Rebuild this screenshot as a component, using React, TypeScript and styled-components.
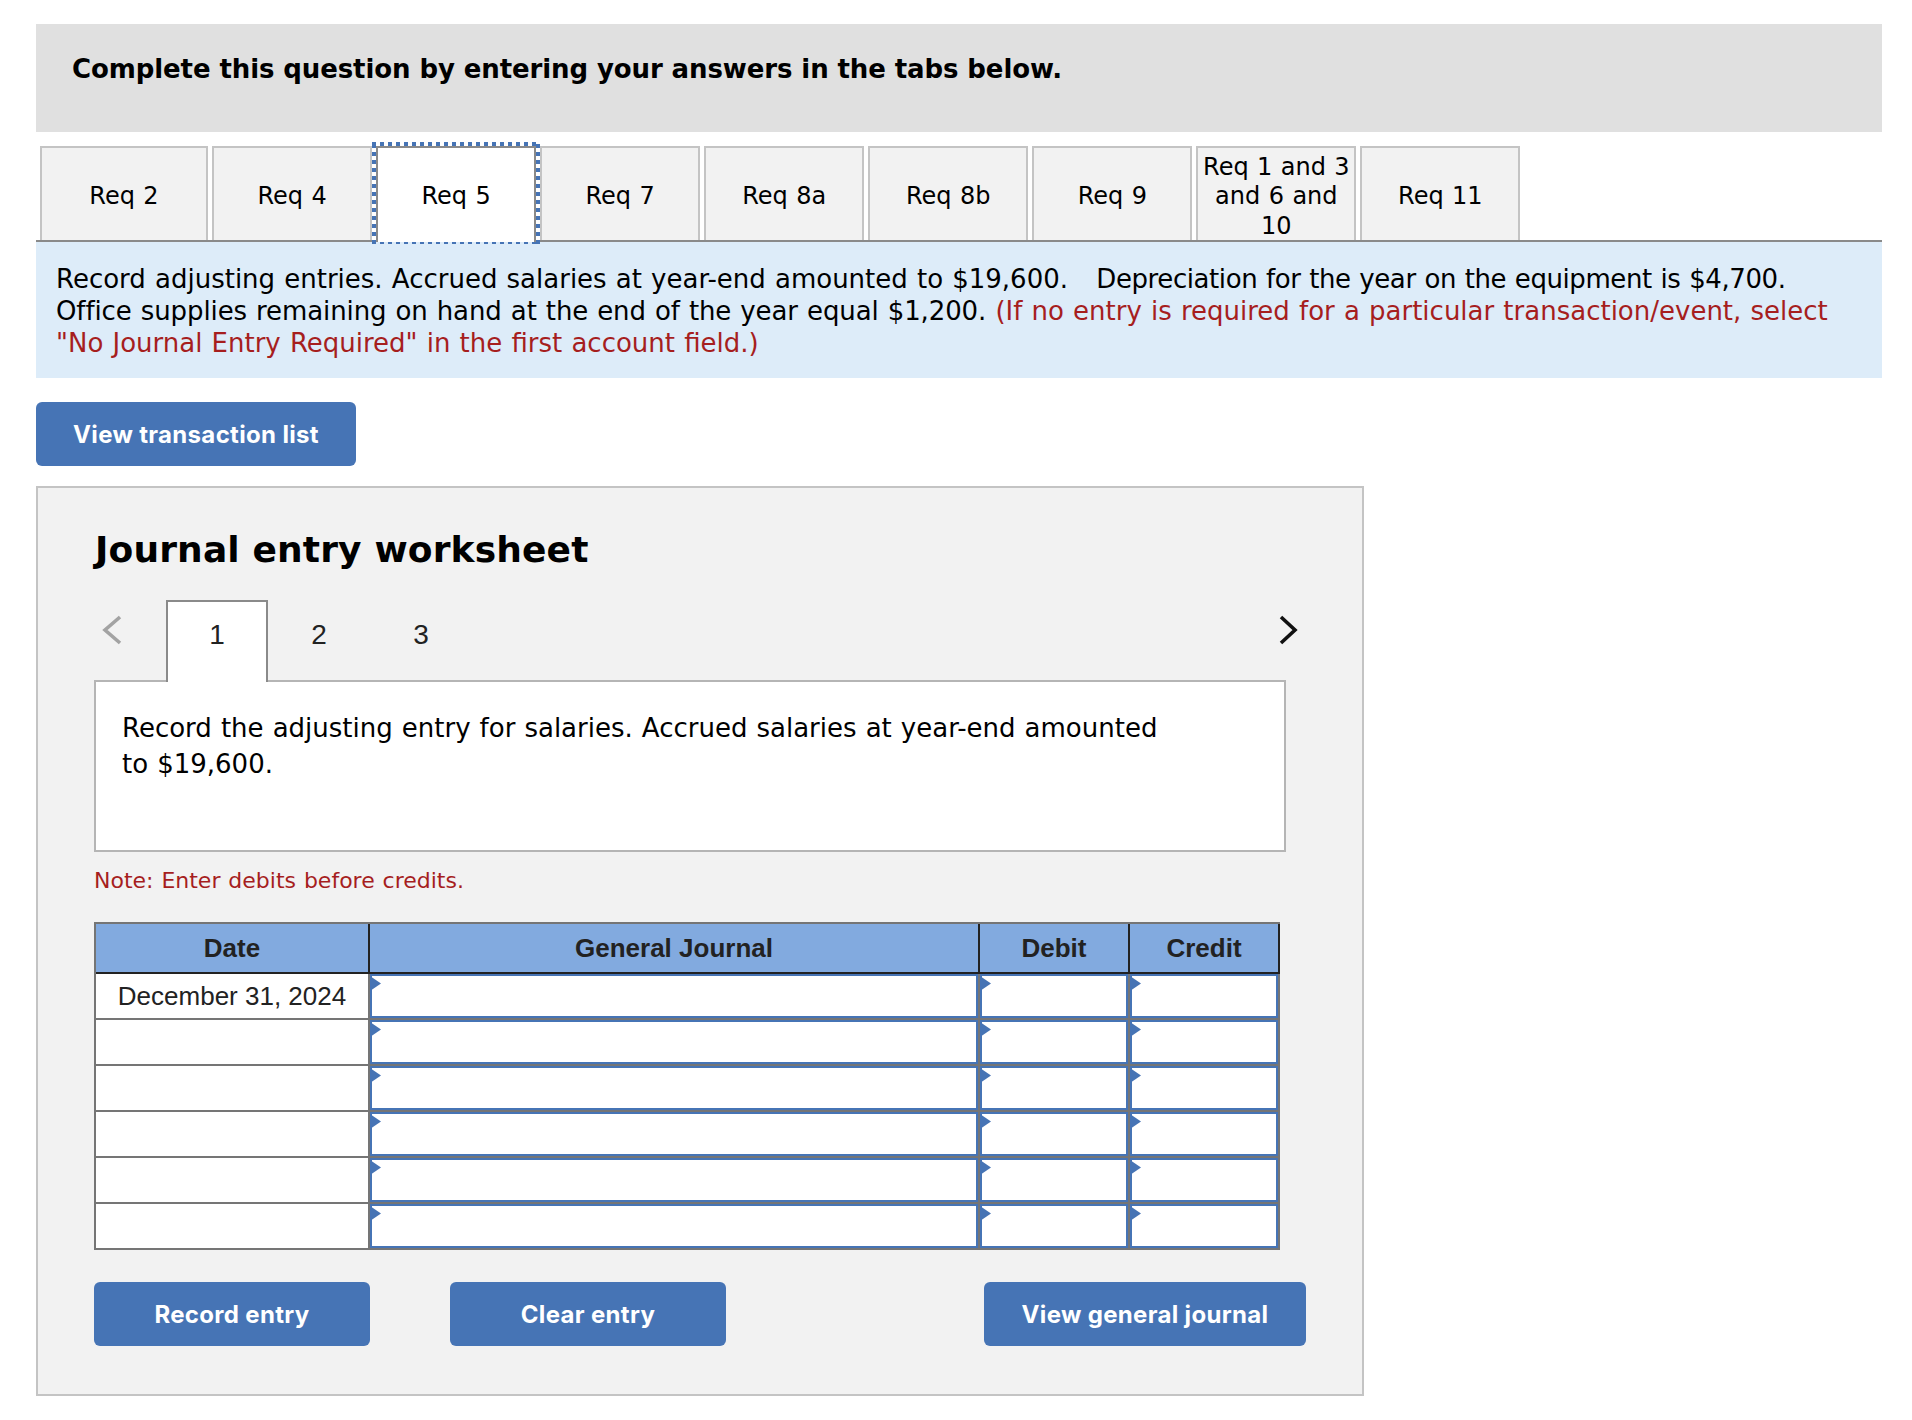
import React from "react";
import styled, { createGlobalStyle } from "styled-components";

const GlobalStyle = createGlobalStyle`
  html, body { margin: 0; padding: 0; background: #fff; }
  * { box-sizing: border-box; }
`;

const verdana = `"DejaVu Sans", Verdana, sans-serif`;
const arial = `"Liberation Sans", Arial, sans-serif`;
const inter = `Inter, "Liberation Sans", sans-serif`;
const blue = "#4674b5";

const Page = styled.div`
  width: 1912px;
  height: 1420px;
  padding: 24px 30px 0 36px;
  font-family: ${verdana};
  color: #000;
`;

const Banner = styled.div`
  height: 108px;
  background: #e0e0e0;
  padding: 29px 36px 0;
  font-size: 26px;
  letter-spacing: -0.1px;
  line-height: 32px;
  font-weight: 700;
`;

const TabStrip = styled.div`
  display: flex;
  gap: 4.05px;
  height: 94px;
  margin-top: 14px;
  padding-left: 4px;
`;

const ReqTab = styled.div<{ $active?: boolean; $wide?: boolean }>`
  position: relative;
  flex: none;
  width: ${(p) => (p.$wide ? "168px" : "160px")};
  height: ${(p) => (p.$active ? "96px" : "94px")};
  display: flex;
  align-items: center;
  justify-content: center;
  text-align: center;
  padding: ${(p) => (p.$active ? "4px" : "6px")} 4px 0;
  font-size: 24px;
  word-spacing: 0.8px;
  line-height: 29.5px;
  background: ${(p) => (p.$active ? "#fff" : "#f2f2f2")};
  border: 2px solid ${(p) => (p.$active ? "#8a8a8a" : "#c4c4c4")};
  border-bottom: none;
  z-index: ${(p) => (p.$active ? 2 : 0)};
`;

const FocusRing = styled.span`
  position: absolute;
  top: -6px;
  left: -6px;
  right: -6px;
  bottom: -2px;
  pointer-events: none;
  background:
    repeating-linear-gradient(90deg, ${blue} 0 4px, transparent 4px 8px) top left / 100% 4px no-repeat,
    repeating-linear-gradient(90deg, ${blue} 0 4px, transparent 4px 8px) bottom left / 100% 2px no-repeat,
    repeating-linear-gradient(0deg, ${blue} 0 4px, #fff 4px 8px) top left / 4px 100% no-repeat,
    repeating-linear-gradient(0deg, ${blue} 0 4px, #fff 4px 8px) top right / 4px 100% no-repeat;
`;

const Instructions = styled.div`
  height: 138px;
  border-top: 2px solid #8a8a8a;
  background: #ddecf9;
  padding: 21px 26px 0 20px;
  font-size: 26px;
  word-spacing: 0.9px;
  line-height: 32px;
`;

const Tracked = styled.span<{ $track: number; $lead?: number }>`
  letter-spacing: ${(p) => p.$track}px;
  margin-left: ${(p) => p.$lead ?? 0}px;
`;

const Red = styled.span`
  color: #a61e1e;
`;

const ActionButton = styled.button<{ $width: number }>`
  display: flex;
  align-items: center;
  justify-content: center;
  width: ${(p) => p.$width}px;
  height: 64px;
  padding: 0;
  border: none;
  border-radius: 6px;
  background: ${blue};
  color: #fff;
  font-family: ${inter};
  font-size: 24px;
  letter-spacing: 0.33px;
  font-weight: 700;
`;

const TopAction = styled(ActionButton)`
  margin-top: 24px;
`;

const Worksheet = styled.section`
  width: 1328px;
  height: 910px;
  margin-top: 20px;
  border: 2px solid #c4c4c4;
  background: #f2f2f2;
  padding: 40px 0 0 56px;
`;

const Title = styled.h2`
  margin: 0 0 0 1px;
  font-size: 36px;
  letter-spacing: 0.15px;
  line-height: 44px;
  font-weight: 700;
`;

const StepRow = styled.div`
  position: relative;
  display: flex;
  width: 1204px;
  height: 82px;
  margin-top: 28px;
`;

const Chevron = styled.svg<{ $next?: boolean }>`
  flex: none;
  width: 20px;
  height: 30px;
  margin: 15px 0 0 ${(p) => (p.$next ? "auto" : "8px")};
  margin-right: ${(p) => (p.$next ? "0" : "44px")};
`;

const StepTab = styled.div<{ $active?: boolean }>`
  position: relative;
  z-index: 1;
  flex: none;
  width: 102px;
  height: 82px;
  padding-top: 13px;
  text-align: center;
  font-family: ${arial};
  font-size: 28px;
  line-height: 40px;
  color: #222;
  background: ${(p) => (p.$active ? "#fff" : "transparent")};
  border: 2px solid ${(p) => (p.$active ? "#8a8a8a" : "transparent")};
  border-bottom: none;
`;

const PromptBox = styled.div`
  width: 1192px;
  height: 172px;
  margin-top: -2px;
  border: 2px solid #b5b5b5;
  background: #fff;
  padding: 28px 110px 0 26px;
  font-size: 26px;
  word-spacing: 0.8px;
  line-height: 36px;
`;

const Note = styled.div`
  margin-top: 13px;
  color: #a61e1e;
  font-size: 22px;
  word-spacing: 0.9px;
  line-height: 32px;
`;

const Journal = styled.table`
  width: 1186px;
  margin-top: 25px;
  table-layout: fixed;
  border-collapse: separate;
  border-spacing: 0;
  border-top: 2px solid #757575;
  border-left: 2px solid #757575;
  font-family: ${arial};
  font-size: 26px;
  color: #222;
`;

const HeadCell = styled.th<{ $width: number }>`
  width: ${(p) => p.$width}px;
  height: 50px;
  padding: 0;
  background: #82aadf;
  font-weight: 700;
  border-right: 2px solid #222;
  border-bottom: 2px solid #222;
`;

const DateCell = styled.td`
  height: 46px;
  padding: 0;
  text-align: center;
  background: #fff;
  border-right: 2px solid #757575;
  border-bottom: 2px solid #757575;
`;

const EntryCell = styled.td`
  height: 46px;
  padding: 0;
  background: #fff;
  border-right: 2px solid #757575;
  border-bottom: 2px solid #757575;
`;

const EntryField = styled.div`
  position: relative;
  height: 44px;
  background: #fff;
  border: 2px solid ${blue};

  &::before {
    content: "";
    position: absolute;
    top: 0;
    left: -2px;
    width: 11px;
    height: 15px;
    background: ${blue};
    clip-path: polygon(0 0, 100% 50%, 0 100%);
  }
`;

const ButtonRow = styled.div`
  display: flex;
  gap: 80px;
  margin-top: 32px;
`;

const JournalButton = styled(ActionButton)`
  margin-left: 178px;
`;

const tabs = ["Req 2", "Req 4", "Req 5", "Req 7", "Req 8a", "Req 8b", "Req 9", "Req 1 and 3 and 6 and 10", "Req 11"];

export default function App() {
  return (
    <Page>
      <GlobalStyle />
      <Banner>Complete this question by entering your answers in the tabs below.</Banner>
      <TabStrip>
        {tabs.map((t, i) => (
          <ReqTab key={t} $active={i === 2} $wide={i === 0}>
            {t}
            {i === 2 && <FocusRing />}
          </ReqTab>
        ))}
      </TabStrip>
      <Instructions>
        Record adjusting entries. Accrued salaries at year-end amounted to $19,600.{"\u00a0 "}
        <Tracked $track={-0.42} $lead={10}>Depreciation for the year on the equipment is $4,700.</Tracked>{" "}
        <Tracked $track={-0.1}>Office supplies remaining on hand at the end of the year equal $1,200.</Tracked>{" "}
        <Red>
          (If no entry is required for a particular transaction/event, select "No Journal Entry Required" in the first
          account field.)
        </Red>
      </Instructions>
      <TopAction $width={320}>View transaction list</TopAction>
      <Worksheet>
        <Title>Journal entry worksheet</Title>
        <StepRow>
          <Chevron viewBox="0 0 20 30" fill="none" stroke="#a3a3a3" strokeWidth="3.6">
            <path d="M18 2 L3 15 L18 28" />
          </Chevron>
          <StepTab $active>1</StepTab>
          <StepTab>2</StepTab>
          <StepTab>3</StepTab>
          <Chevron $next viewBox="0 0 20 30" fill="none" stroke="#111" strokeWidth="3.6">
            <path d="M3 2 L17 15 L3 28" />
          </Chevron>
        </StepRow>
        <PromptBox>Record the adjusting entry for salaries. Accrued salaries at year-end amounted to $19,600.</PromptBox>
        <Note>Note: Enter debits before credits.</Note>
        <Journal>
          <thead>
            <tr>
              <HeadCell $width={274}>Date</HeadCell>
              <HeadCell $width={610}>General Journal</HeadCell>
              <HeadCell $width={150}>Debit</HeadCell>
              <HeadCell $width={150}>Credit</HeadCell>
            </tr>
          </thead>
          <tbody>
            {[0, 1, 2, 3, 4, 5].map((r) => (
              <tr key={r}>
                <DateCell>{r === 0 ? "December 31, 2024" : ""}</DateCell>
                {[0, 1, 2].map((c) => (
                  <EntryCell key={c}>
                    <EntryField />
                  </EntryCell>
                ))}
              </tr>
            ))}
          </tbody>
        </Journal>
        <ButtonRow>
          <ActionButton $width={276}>Record entry</ActionButton>
          <ActionButton $width={276}>Clear entry</ActionButton>
          <JournalButton $width={322}>View general journal</JournalButton>
        </ButtonRow>
      </Worksheet>
    </Page>
  );
}
